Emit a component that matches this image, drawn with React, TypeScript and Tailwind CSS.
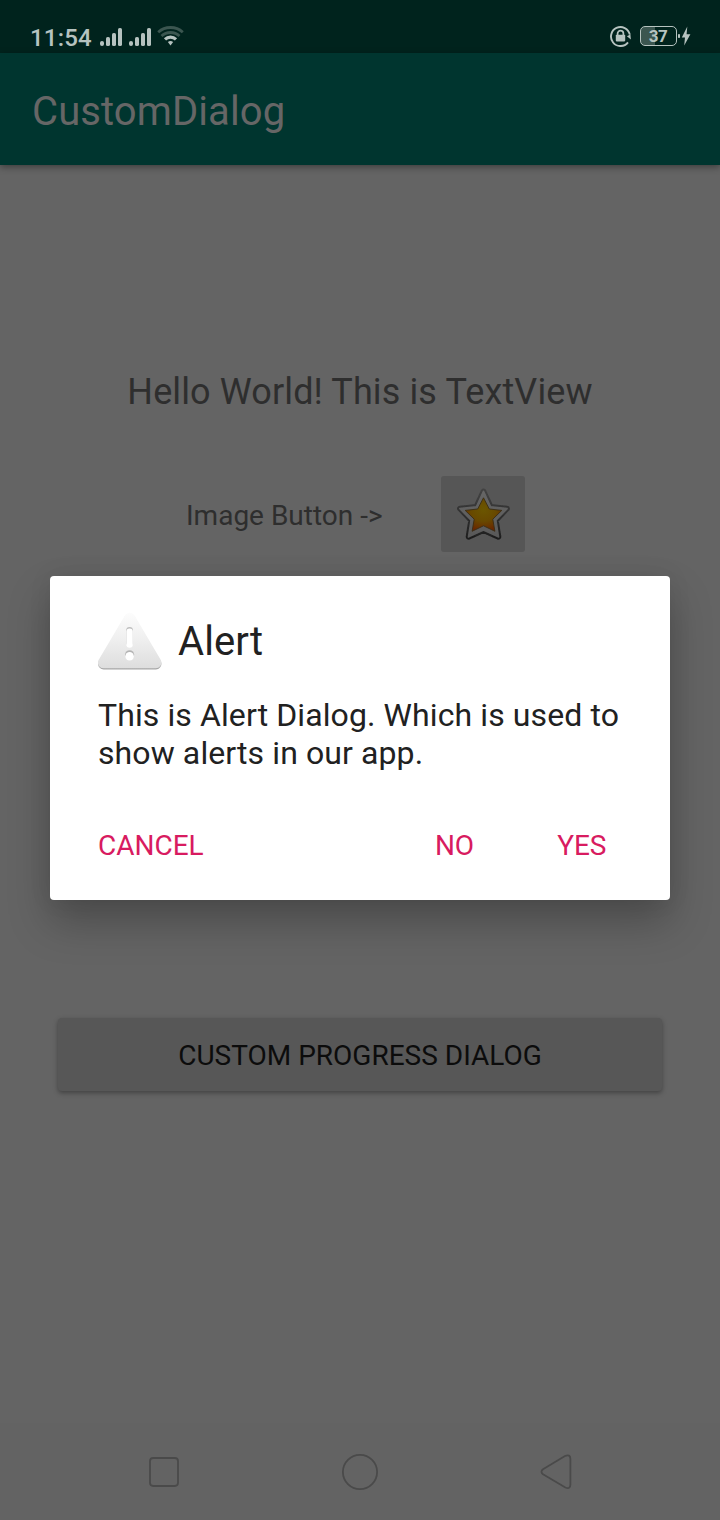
function SignalBars() {
  return (
    <svg className="block" width="23" height="18" viewBox="0 0 23 18" fill="#b6c3c0">
      <rect x="0" y="13" width="4" height="5" rx="2" />
      <rect x="6" y="9" width="4" height="9" rx="1.6" />
      <rect x="12" y="5" width="4" height="13" rx="1.6" />
      <rect x="18" y="0" width="4" height="18" rx="1.6" />
    </svg>
  );
}

function WifiIcon() {
  return (
    <svg className="block" width="28" height="21" viewBox="0 0 28 21" fill="none" strokeWidth="2.8">
      <path d="M1.2 7.2 A18.4 18.4 0 0 1 25.8 7.2" stroke="#3b5650" />
      <path d="M4.5 11 A13.3 13.3 0 0 1 22.5 11" stroke="#3b5650" />
      <path d="M8 14.4 A8 8 0 0 1 19 14.4" stroke="#b6c3c0" strokeWidth="3.2" />
      <path d="M10.9 17 Q13.5 14.8 16.1 17 L13.5 20.4 Z" fill="#b6c3c0" />
    </svg>
  );
}

function RotationLockIcon() {
  return (
    <svg className="block" width="22" height="22" viewBox="0 0 22 22" fill="none" stroke="#b6c3c0">
      <path d="M18 17.4 A9.5 9.5 0 1 1 19.8 9.6" strokeWidth="1.9" />
      <path d="M16.9 11.2 L20.4 9.4 L20.9 14.4 Z" fill="#b6c3c0" stroke="none" />
      <rect x="5.8" y="9.8" width="9.4" height="6.6" rx="0.8" fill="#b6c3c0" stroke="none" />
      <path d="M7.6 10.5 V8.6 a2.9 2.9 0 0 1 5.8 0 V10.5" strokeWidth="1.7" />
    </svg>
  );
}

function BoltIcon() {
  return (
    <svg className="block" width="13" height="20" viewBox="0 0 13 20" fill="#b6c3c0">
      <rect x="0" y="8" width="2" height="4" rx="0.8" />
      <path d="M9.3 0.5 L3.8 11.4 H7 L6.2 19.5 L12.4 8.2 H8.6 Z" />
    </svg>
  );
}

function StarIcon() {
  return (
    <svg className="mt-0.5 block" width="56" height="56" viewBox="0 0 56 56" strokeLinejoin="round">
      <defs>
        <linearGradient id="rim" x1="0" y1="0" x2="0" y2="1">
          <stop offset="0" stopColor="#424242" />
          <stop offset="1" stopColor="#1f1f1f" />
        </linearGradient>
        <linearGradient id="silver" x1="0" y1="0" x2="0" y2="1">
          <stop offset="0" stopColor="#666666" />
          <stop offset="1" stopColor="#595959" />
        </linearGradient>
        <radialGradient id="gold" cx="0.5" cy="0.35" r="0.7">
          <stop offset="0" stopColor="#6b5600" />
          <stop offset="0.5" stopColor="#684900" />
          <stop offset="1" stopColor="#6a1f00" />
        </radialGradient>
        <filter id="soft" x="-10%" y="-10%" width="120%" height="120%">
          <feGaussianBlur stdDeviation="0.6" />
        </filter>
      </defs>
      <g filter="url(#soft)">
        <path d="M28.5 4.5 L35.5 19.8 L52 21.6 L40.8 33.2 L43.4 49.8 L28.5 43 L13.6 49.8 L16.2 33.2 L5 21.6 L21.5 19.8 Z" fill="#646464" stroke="url(#rim)" strokeWidth="5.8" />
        <path d="M28.5 4.5 L35.5 19.8 L52 21.6 L40.8 33.2 L43.4 49.8 L28.5 43 L13.6 49.8 L16.2 33.2 L5 21.6 L21.5 19.8 Z" fill="url(#silver)" stroke="url(#silver)" strokeWidth="1.8" />
      </g>
      <path d="M28.5 10.8 L34.3 22 L46.8 23.4 L37.8 32.2 L39.9 44.3 L28.5 38.8 L17.1 44.3 L19.2 32.2 L10.2 23.4 L22.7 22 Z" fill="url(#gold)" stroke="#3a2d14" strokeWidth="0.9" />
    </svg>
  );
}

function AlertIcon() {
  return (
    <svg className="block" width="64" height="64" viewBox="0 0 64 64" strokeLinejoin="round">
      <defs>
        <linearGradient id="warn" gradientUnits="userSpaceOnUse" x1="0" y1="4" x2="0" y2="60">
          <stop offset="0" stopColor="#fcfcfc" />
          <stop offset="0.5" stopColor="#eeeeee" />
          <stop offset="1" stopColor="#dddddd" />
        </linearGradient>
        <linearGradient id="warnEdge" gradientUnits="userSpaceOnUse" x1="0" y1="38" x2="0" y2="60">
          <stop offset="0" stopColor="#f2f2f2" />
          <stop offset="1" stopColor="#a5a5a5" />
        </linearGradient>
      </defs>
      <path d="M31.7 10.4 L57.7 54.8 H5.7 Z" fill="url(#warnEdge)" stroke="url(#warnEdge)" strokeWidth="11.5" />
      <path d="M31.7 9.6 L57.7 53.6 H5.7 Z" fill="url(#warn)" stroke="url(#warn)" strokeWidth="11.5" />
      <rect x="28.2" y="18" width="6.8" height="19" rx="3.4" fill="#bdbdbd" />
      <rect x="28.4" y="19.4" width="6.4" height="19.4" rx="3.2" fill="#ffffff" />
      <circle cx="31.6" cy="45.8" r="4.6" fill="#b4b4b4" />
      <circle cx="31.6" cy="47.2" r="4.3" fill="#ffffff" />
    </svg>
  );
}

function StatusBar() {
  return (
    <div className="flex h-[53px] items-start justify-between bg-[#00231d] pr-[29px] pl-[30px]">
      <div className="flex items-start">
        <span className="mt-6 w-[70px] text-2xl leading-7 font-medium tracking-[0.2px] text-[#b6c3c0]">11:54</span>
        <div className="mt-7 flex gap-[6px]">
          <SignalBars />
          <SignalBars />
        </div>
        <div className="mt-[25px] ml-[5px]">
          <WifiIcon />
        </div>
      </div>
      <div className="flex items-start pt-[26px]">
        <div className="-mt-px">
          <RotationLockIcon />
        </div>
        <div className="ml-2 flex h-5 w-[37px] items-center justify-center rounded-[5px] border border-[#b6c3c0] bg-linear-to-r from-[#3b5650] from-40% to-[#00231d] to-40% pr-px text-[17px] leading-none font-bold tracking-[-0.4px] text-[#b6c3c0]">
          37
        </div>
        <div className="ml-px">
          <BoltIcon />
        </div>
      </div>
    </div>
  );
}

function NavigationBar() {
  return (
    <div className="flex h-[97px] justify-center bg-[#636363] pt-[29px]">
      <svg className="block" width="426" height="40" viewBox="0 0 426 40" fill="none" stroke="#4a4a4a" strokeWidth="1.8" strokeLinejoin="round">
        <rect x="3" y="6" width="28" height="28" rx="3.2" />
        <circle cx="213" cy="20" r="17.1" />
        <path d="M396 17.3 L418 4 Q423.4 1.8 423.4 7 V32.5 Q423.4 37.5 418.4 35.5 L396 22.3 Q392.9 19.8 396 17.3 Z" />
      </svg>
    </div>
  );
}

function AlertDialog() {
  return (
    <div role="alertdialog" className="absolute top-[576px] left-[50px] flex h-[324px] w-[620px] flex-col rounded-[4px] bg-white pt-[33px] shadow-[0_22px_42px_rgba(0,0,0,0.25),0_0_24px_rgba(0,0,0,0.07)]">
      <div className="flex h-16 items-center pl-12">
        <AlertIcon />
        <h2 className="ml-4 pt-0.5 text-[40px] leading-[48px] font-normal tracking-[0.1px] text-[#212121]">Alert</h2>
      </div>
      <p className="mt-[23px] pl-12 text-[32px] leading-[38px] tracking-[0.1px] whitespace-nowrap text-[#212121]">
        This is Alert Dialog. Which is used to
        <br />
        show alerts in our app.
      </p>
      <div className="mt-[58px] flex items-center pr-[63.5px] pl-12 text-[28px] leading-8 text-[#d81b60]">
        <button>CANCEL</button>
        <button className="ml-auto">NO</button>
        <button className="ml-[83px]">YES</button>
      </div>
    </div>
  );
}

export default function App() {
  return (
    <div className="relative flex h-[1520px] w-[720px] flex-col overflow-hidden bg-[#646464] font-[Roboto,sans-serif]">
      <StatusBar />
      <header className="flex h-28 items-center bg-[#00352f] pt-1.5 pl-8 shadow-[0_2px_7px_rgba(0,0,0,0.4)]">
        <h1 className="text-[40px] leading-[48px] font-normal tracking-[0.1px] text-[#666666]">CustomDialog</h1>
      </header>
      <main className="flex flex-1 flex-col items-center">
        <p className="mt-[206px] text-[36px] leading-[42px] tracking-[0.12px] text-[#2e2e2e]">Hello World! This is TextView</p>
        <div className="mt-[63px] flex w-full items-center pl-[186px]">
          <span className="w-[255px] pt-1 text-[28px] leading-8 text-[#2e2e2e]">Image Button -&gt;</span>
          <button className="flex h-[76px] w-[84px] items-center justify-center rounded-[3px] bg-[#565656]">
            <StarIcon />
          </button>
        </div>
        <button className="mt-[466px] h-[73px] w-[604px] rounded-[4px] bg-[#575757] pt-0.5 text-[28px] leading-8 text-[#0c0c0c] shadow-[0_2px_5px_rgba(0,0,0,0.35)]">
          CUSTOM PROGRESS DIALOG
        </button>
      </main>
      <NavigationBar />
      <AlertDialog />
    </div>
  );
}
